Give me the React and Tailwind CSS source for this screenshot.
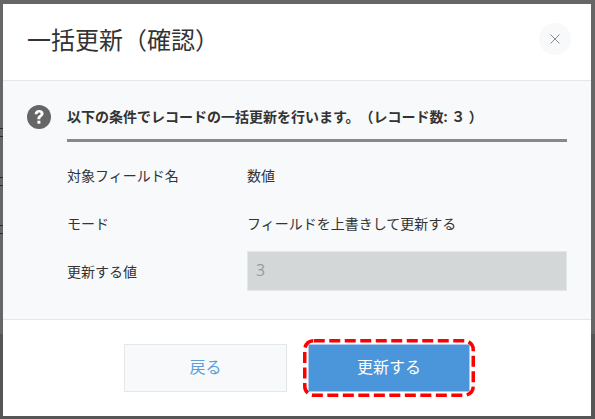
import React from "react";

const FONT = { fontFamily: '"Open Sans", "Noto Sans CJK JP", sans-serif' };

const Row = ({ label, children }) => (
  <div className="flex items-center h-[40px] text-[14px] text-[#333]">
    <div className="w-[180px] shrink-0">{label}</div>
    <div className="flex-1 min-w-0">{children}</div>
  </div>
);

export default function App() {
  return (
    <div className="relative w-[595px] h-[419px] overflow-hidden bg-[#666666] pt-[4px] pl-[3px] [text-spacing-trim:space-all] [font-feature-settings:'chws'_0]" style={FONT}>
      {/* page behind the overlay */}
      <div className="absolute left-0 right-0 bottom-0 h-[85px] bg-[#565656]" />
      <div className="absolute left-0 top-[128px] w-[3px] h-px bg-[#2a2a2a]" />
      <div className="absolute left-0 top-[136px] w-[3px] h-px bg-[#2a2a2a]" />
      <div className="absolute left-0 top-[177px] w-[3px] h-px bg-[#2a2a2a]" />
      <div className="absolute left-0 top-[185px] w-[3px] h-px bg-[#2a2a2a]" />
      <div className="absolute left-0 top-[225px] w-[3px] h-px bg-[#2a2a2a]" />
      <div className="absolute left-0 top-[233px] w-[3px] h-px bg-[#2a2a2a]" />

      <div className="relative w-[588px] h-[412px] bg-white flex flex-col">
        <header className="h-[76px] shrink-0 flex items-center justify-between pl-[24px] pr-[20px] border-b border-[#e3e7e8] box-content">
          <h1 className="text-[24px] font-normal text-[#333] leading-none mb-[4px]">一括更新（確認）</h1>
          <button className="w-[32px] h-[32px] rounded-full bg-[#f7f9fa] flex items-center justify-center mb-[6px]">
            <svg width="10" height="10" viewBox="0 0 10 10" fill="none" stroke="#8c8c8c" strokeWidth="1">
              <path d="M.5.5l9 9M9.5.5l-9 9" />
            </svg>
          </button>
        </header>

        <div className="h-[239px] shrink-0 bg-[#f7f9fa] border-b border-[#e3e7e8] pl-[24px] pr-[24px] pt-[24px]">
          <div className="flex items-start">
            <svg width="24" height="24" viewBox="0 0 24 24" className="shrink-0">
              <circle cx="12" cy="12" r="12" fill="#666666" />
              <path d="M7.6 9.2c.2-2.6 2-4.2 4.6-4.2 2.6 0 4.4 1.5 4.4 3.6 0 1.5-.8 2.4-1.9 3.2-1 .7-1.4 1.2-1.4 2.1v.4h-2.9v-.8c0-1.4.6-2.2 1.7-3 .9-.6 1.5-1.1 1.5-1.8 0-.8-.6-1.3-1.4-1.3-1 0-1.6.7-1.7 1.8z" fill="#fff" />
              <rect x="10.4" y="15.7" width="3" height="3" fill="#fff" />
            </svg>
            <div className="flex-1 ml-[16px]">
              <p className="text-[14px] font-bold text-[#333] h-[34px] leading-[24px] border-b-[3px] border-[#888888] box-content">
                以下の条件でレコードの一括更新を行います。（レコード数: ３ ）
              </p>
              <div className="mt-[13px] flex flex-col gap-[8px]">
                <Row label="対象フィールド名">数値</Row>
                <Row label="モード">フィールドを上書きして更新する</Row>
                <Row label="更新する値">
                  <div className="h-[40px] bg-[#d4d7d7] border border-[#e3e7e8] flex items-center pl-[8px] pb-[3px] text-[16px] text-[#999]">
                    3
                  </div>
                </Row>
              </div>
            </div>
          </div>
        </div>

        <footer className="flex-1 flex justify-center items-center gap-[21px]">
          <button className="w-[163px] h-[48px] pb-[3px] bg-[#f7f9fa] border border-[#e3e7e8] text-[16px] text-[#5ba0dd]">
            戻る
          </button>
          <div className="relative">
            <button className="block w-[162px] h-[48px] pb-[3px] bg-[#4b96da] border border-[#a9cdec] text-[16px] text-white">
              更新する
            </button>
            <svg width="172" height="58" className="absolute left-[-5px] top-[-5px]" fill="none">
              <rect x="1.75" y="1.75" width="168.5" height="54.5" rx="9" stroke="#ff0000" strokeWidth="3.5" strokeDasharray="11 4.5" />
            </svg>
          </div>
        </footer>
      </div>
    </div>
  );
}
